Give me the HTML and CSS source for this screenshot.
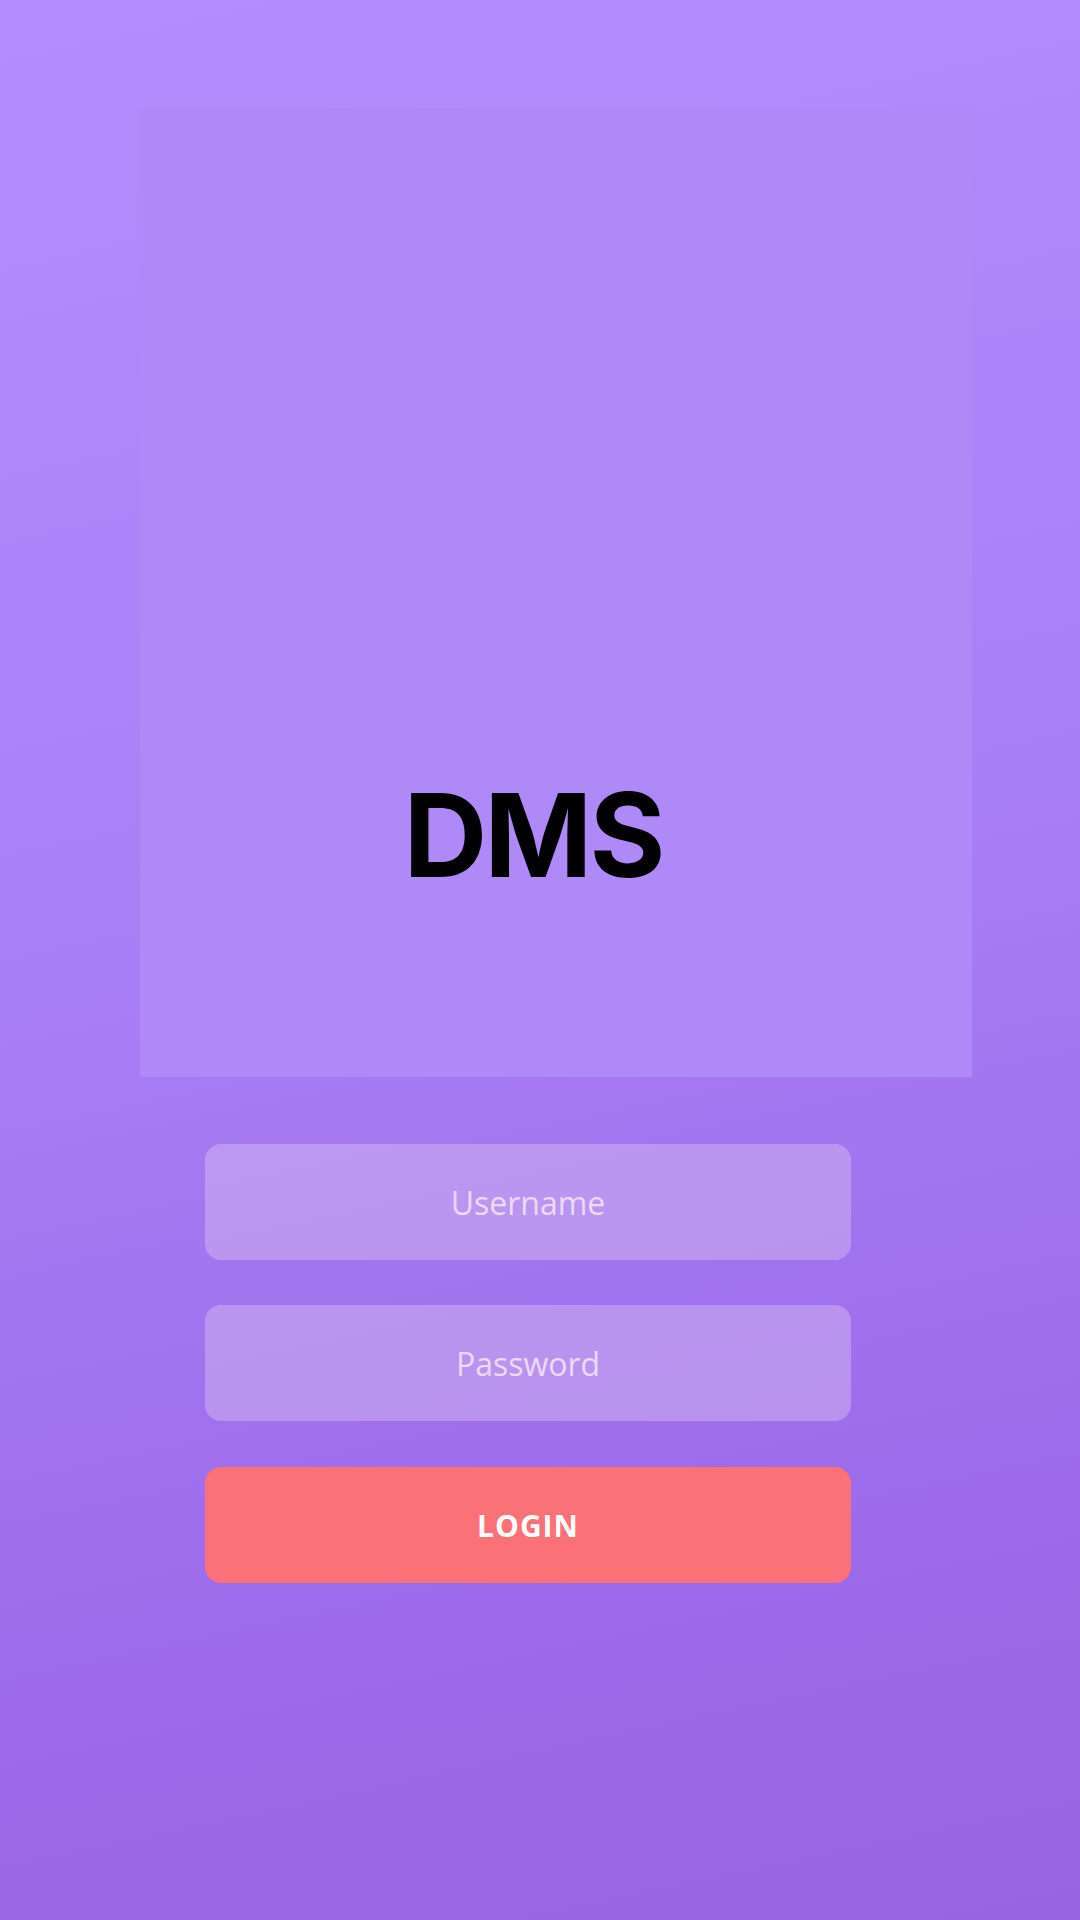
FILE: index.html
```html
<!DOCTYPE html>
<html lang="en">
<head>
<meta charset="utf-8">
<title>DMS Login</title>
<link rel="stylesheet" href="styles.css">
</head>
<body>
<main class="page">
  <section class="hero">
    <h1 class="brand">DMS</h1>
  </section>
  <form class="login-form">
    <input class="field" type="text" placeholder="Username">
    <input class="field" type="password" placeholder="Password">
    <button class="login-btn" type="button">LOGIN</button>
  </form>
</main>
</body>
</html>
```
FILE: styles.css
```css
html, body {
  margin: 0;
  padding: 0;
}
body {
  width: 1080px;
  height: 1920px;
  overflow: hidden;
  font-family: "Open Sans", "Noto Sans", sans-serif;
}
.page {
  box-sizing: border-box;
  width: 1080px;
  height: 1920px;
  padding-top: 108px;
  background: linear-gradient(168deg, #b38dfe 0%, #a97ff6 45%, #9c6aea 80%, #9865e2 100%);
  display: flex;
  flex-direction: column;
}
.hero {
  box-sizing: border-box;
  margin-left: 140px;
  width: 832px;
  height: 969px;
  background: #b089f9;
  display: flex;
  flex-direction: column;
  justify-content: flex-end;
  padding-bottom: 184px;
  padding-right: 46px;
}
.brand {
  margin: 0;
  font-family: Inter, "Liberation Sans", sans-serif;
  font-weight: 700;
  font-size: 116px;
  line-height: 1;
  letter-spacing: -3px;
  color: #000;
  text-align: center;
}
.login-form {
  margin-top: 67px;
  margin-left: 205px;
  width: 646px;
  display: flex;
  flex-direction: column;
  gap: 45px;
}
.field, .login-btn {
  box-sizing: border-box;
  width: 646px;
  height: 116px;
  border: none;
  border-radius: 16px;
  outline: none;
  text-align: center;
  font-family: "Open Sans", "Noto Sans", sans-serif;
}
.field {
  background: rgba(214, 190, 240, 0.45);
  font-size: 32px;
  color: #ecdaf5;
}
.field::placeholder {
  color: #ecdaf5;
  opacity: 1;
}
.login-btn {
  margin-top: 1px;
  background: #fb7178;
  color: #fff;
  font-size: 30px;
  font-weight: 700;
  letter-spacing: 1px;
}
```
